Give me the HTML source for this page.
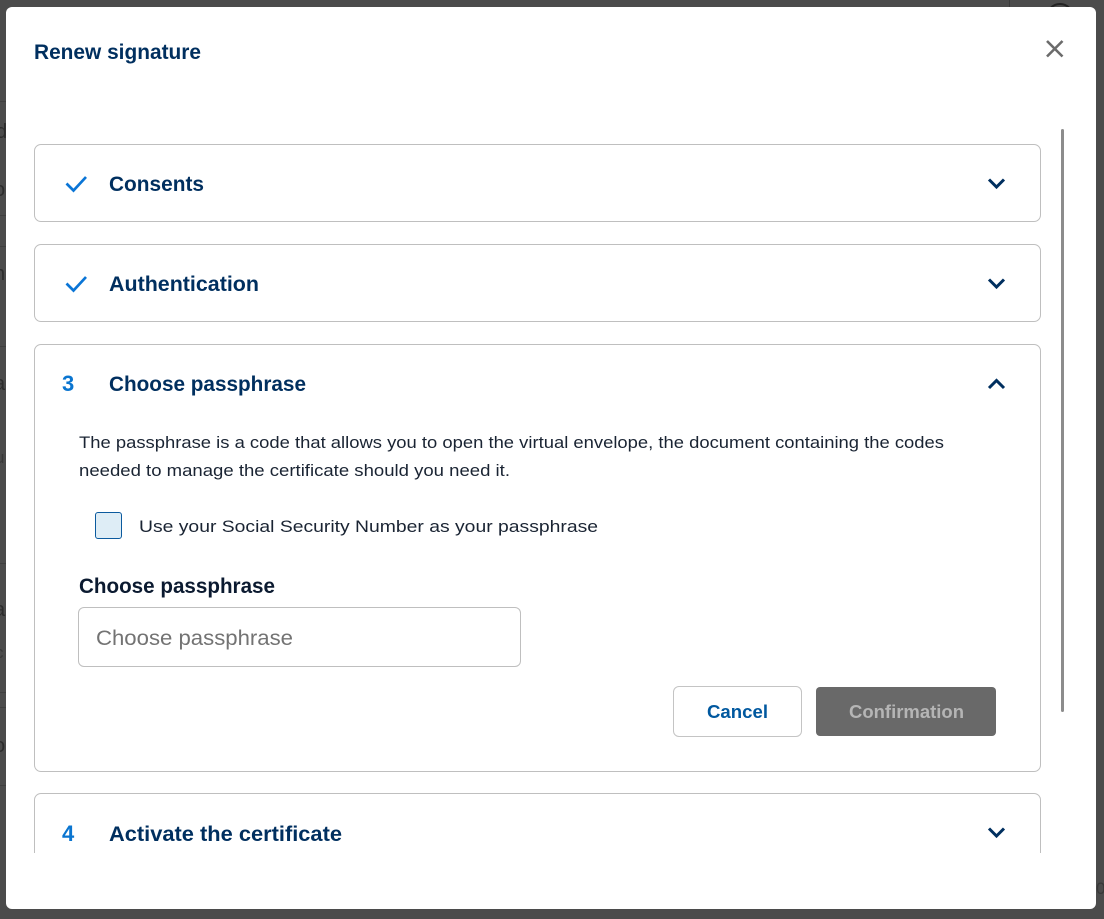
<!DOCTYPE html>
<html lang="en"><head><meta charset="utf-8"><title>Renew signature</title>
<style>
html,body{margin:0;padding:0;width:1104px;height:919px;overflow:hidden;background:#4b4b4b;font-family:"Liberation Sans",sans-serif}
.abs,.card,.modal{position:absolute;box-sizing:border-box}
.modal{left:6px;top:7px;width:1090px;height:902px;background:#fff;border-radius:6px}
.card{left:34px;width:1007px;border:1px solid #bfbfbf;border-radius:7px;background:#fff}
svg.t{position:absolute;left:0;top:0;width:1104px;height:919px}
svg.t text{font-family:"Liberation Sans",sans-serif}
.h{font-size:21px;font-weight:700;fill:#002f5f}
.b{font-size:17px;fill:#1a2433}
.f{position:absolute;font-size:20px;line-height:22px;color:#2c2c2c;white-space:nowrap}
.g{position:absolute;font-size:17px;line-height:20px;color:#383838;white-space:nowrap}
</style></head><body>
<div class="abs" style="left:0;top:101px;width:6px;height:1px;background:#3f3f3f"></div>
<div class="abs" style="left:0;top:215px;width:6px;height:1px;background:#3f3f3f"></div>
<div class="abs" style="left:0;top:246px;width:6px;height:1px;background:#3f3f3f"></div>
<div class="abs" style="left:0;top:346px;width:6px;height:1px;background:#3f3f3f"></div>
<div class="abs" style="left:0;top:563px;width:6px;height:1px;background:#3f3f3f"></div>
<div class="abs" style="left:0;top:692px;width:6px;height:1px;background:#3f3f3f"></div>
<div class="abs" style="left:0;top:707px;width:6px;height:1px;background:#3f3f3f"></div>
<div class="abs" style="left:0;top:785px;width:6px;height:1px;background:#3f3f3f"></div>
<div class="f" style="left:-4px;top:121px">d(</div>
<div class="f" style="left:-6px;top:179px">o</div>
<div class="f" style="left:-6px;top:263px">n</div>
<div class="f" style="left:-6px;top:373px">a</div>
<div class="g" style="left:-5px;top:448px">u</div>
<div class="f" style="left:-6px;top:599px">a</div>
<div class="g" style="left:-5px;top:643px">c</div>
<div class="f" style="left:-6px;top:735px">o</div>
<div class="g" style="left:1096px;top:879px">02</div>
<div class="abs" style="left:1009px;top:0;width:1px;height:7px;background:#3a3a3a"></div>
<div class="abs" style="left:1046px;top:3px;width:28px;height:28px;border:2.5px solid #222;border-radius:50%"></div>
<div class="modal"></div>
<div class="card" style="top:144px;height:78px"></div>
<div class="card" style="top:244px;height:78px"></div>
<div class="card" style="top:344px;height:428px"></div>
<div class="card" style="top:793px;height:90px"></div>
<div class="abs" style="left:20px;top:853px;width:1040px;height:40px;background:#fff"></div>
<div class="abs" style="left:1061px;top:129px;width:3px;height:583px;background:#8c8c8c;border-radius:2px"></div>
<div class="abs" style="left:95px;top:512px;width:27px;height:27px;background:#deedf6;border:1.5px solid #0b5a9e;border-radius:3px"></div>
<div class="abs" style="left:78px;top:607px;width:443px;height:60px;border:1px solid #bfbfbf;border-radius:6px"></div>
<div class="abs" style="left:673px;top:686px;width:129px;height:51px;border:1px solid #c4c4c4;border-radius:6px;background:#fff"></div>
<div class="abs" style="left:816px;top:687px;width:180px;height:49px;background:#696969;border-radius:4px"></div>
<svg class="t" viewBox="0 0 1104 919" xmlns="http://www.w3.org/2000/svg">
<path d="M1047 41l15.5 15.5M1062.500 41L1047 56.500" stroke="#6b6b6b" stroke-width="2.600" fill="none"/>
<path d="M66.500 183.500l7 7 12.500-13.500" stroke="#0a75d6" stroke-width="2.700" fill="none"/>
<path d="M66.500 283.500l7 7 12.500-13.500" stroke="#0a75d6" stroke-width="2.700" fill="none"/>
<path d="M989 179.500l7.500 7.500 7.500-7.500" stroke="#002f5f" stroke-width="3" fill="none"/>
<path d="M989 279.500l7.500 7.500 7.500-7.500" stroke="#002f5f" stroke-width="3" fill="none"/>
<path d="M989 388l7.500-7.500 7.500 7.500" stroke="#002f5f" stroke-width="3" fill="none"/>
<path d="M989 828.500l7.500 7.500 7.500-7.500" stroke="#002f5f" stroke-width="3" fill="none"/>
<text class="h" x="34" y="59" textLength="167" lengthAdjust="spacingAndGlyphs">Renew signature</text>
<text class="h" x="109" y="191" textLength="95" lengthAdjust="spacingAndGlyphs">Consents</text>
<text class="h" x="109" y="291" textLength="150" lengthAdjust="spacingAndGlyphs">Authentication</text>
<text class="h" x="109" y="391" textLength="197" lengthAdjust="spacingAndGlyphs">Choose passphrase</text>
<text class="h" x="109" y="841" textLength="233" lengthAdjust="spacingAndGlyphs">Activate the certificate</text>
<text x="62" y="391" style="font-size:22px;font-weight:700;fill:#0a75d0">3</text>
<text x="62" y="841" style="font-size:22px;font-weight:700;fill:#0a75d0">4</text>
<text class="b" x="79" y="448" textLength="865" lengthAdjust="spacingAndGlyphs">The passphrase is a code that allows you to open the virtual envelope, the document containing the codes</text>
<text class="b" x="79" y="476" textLength="431" lengthAdjust="spacingAndGlyphs">needed to manage the certificate should you need it.</text>
<text class="b" x="139" y="532" textLength="459" lengthAdjust="spacingAndGlyphs">Use your Social Security Number as your passphrase</text>
<text x="79" y="593" textLength="196" lengthAdjust="spacingAndGlyphs" style="font-size:21px;font-weight:700;fill:#0b1a30">Choose passphrase</text>
<text x="96" y="645" textLength="197" lengthAdjust="spacingAndGlyphs" style="font-size:21px;fill:#737373">Choose passphrase</text>
<text x="707" y="718" textLength="61" lengthAdjust="spacingAndGlyphs" style="font-size:18px;font-weight:700;fill:#00589f">Cancel</text>
<text x="849" y="718" textLength="115" lengthAdjust="spacingAndGlyphs" style="font-size:18px;font-weight:700;fill:#b5b5b5">Confirmation</text>
</svg>
</body></html>
